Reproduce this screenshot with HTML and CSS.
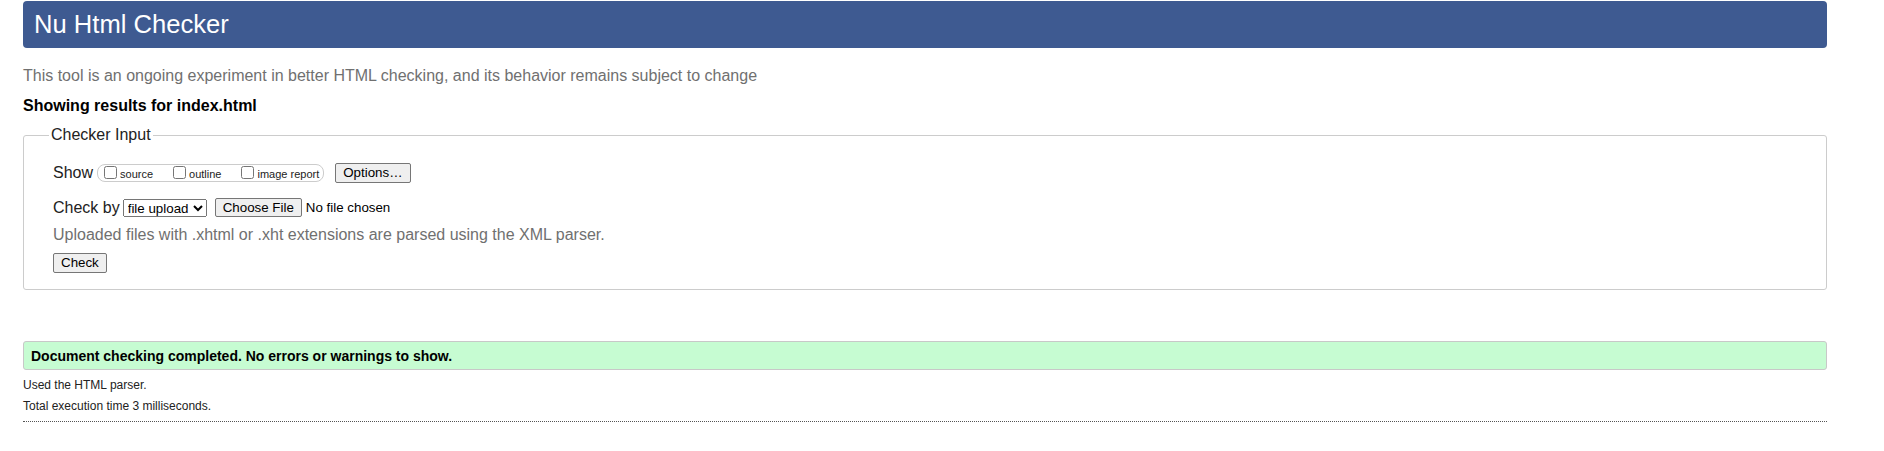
FILE: index.html
```html
<!DOCTYPE html>
<html lang="en">
<head>
<meta charset="utf-8">
<title>Nu Html Checker</title>
<link rel="stylesheet" href="styles.css">
</head>
<body>
<div class="page">
  <h1 class="title">Nu Html Checker</h1>
  <p class="tagline">This tool is an ongoing experiment in better HTML checking, and its behavior remains subject to change</p>
  <p class="showing">Showing results for index.html</p>
  <form class="checker">
    <fieldset class="input-set">
      <legend class="input-legend">Checker Input</legend>
      <div class="row row-show">
        <span class="row-label">Show</span>
        <span class="pill">
          <label class="opt"><input type="checkbox" class="cb"><span class="opt-text">source</span></label>
          <label class="opt"><input type="checkbox" class="cb"><span class="opt-text">outline</span></label>
          <label class="opt opt-last"><input type="checkbox" class="cb"><span class="opt-text">image report</span></label>
        </span>
        <button type="button" class="btn btn-options">Options…</button>
      </div>
      <div class="row row-by">
        <span class="row-label">Check by</span>
        <select class="sel"><option>file upload</option></select>
        <input type="file" class="file">
      </div>
      <p class="hint">Uploaded files with .xhtml or .xht extensions are parsed using the XML parser.</p>
      <div class="row row-submit"><button type="button" class="btn">Check</button></div>
    </fieldset>
  </form>
  <p class="success">Document checking completed. No errors or warnings to show.</p>
  <p class="meta meta-first">Used the HTML parser.</p>
  <p class="meta">Total execution time 3 milliseconds.</p>
  <hr class="rule">
</div>
</body>
</html>
```

FILE: styles.css
```css
html, body {
  margin: 0;
  padding: 0;
  background: #fff;
}

body {
  font-family: "Liberation Sans", Arial, sans-serif;
  font-size: 16px;
  color: #000;
}

.page {
  margin-left: 23px;
  width: 1804px;
  padding-top: 1px;
}

.title {
  margin: 0;
  height: 47px;
  line-height: 47px;
  padding: 0 11px;
  font-size: 25.6px;
  font-weight: normal;
  color: #fff;
  background: #3e5a91;
  border-radius: 4px;
}

.tagline {
  margin: 18.5px 0 0;
  color: #707070;
}

.showing {
  margin: 12px 0 0;
  font-weight: bold;
}

.checker {
  margin: 0;
}

.input-set {
  margin: 11.9px 0 0;
  padding: 0 29px 16px;
  border: 1px solid #cccccc;
  border-radius: 3px;
  min-width: 0;
}

.input-legend {
  padding: 0 2px;
  margin-left: -4px;
  color: #222;
}

.row {
  display: flex;
  align-items: center;
}

.row-show {
  margin-top: 18.9px;
  height: 20px;
}

.row-by {
  margin-top: 15px;
  height: 19px;
}

.row-submit {
  margin-top: 9.7px;
  height: 20px;
}

.row-label {
  color: #222;
}

.pill {
  display: flex;
  align-items: flex-start;
  box-sizing: border-box;
  height: 18px;
  margin-left: 4px;
  padding: 1px 4px 0 2px;
  border: 1px solid #cccccc;
  border-radius: 8px;
}

.opt {
  display: flex;
  align-items: flex-start;
  margin-right: 16px;
  font-size: 11px;
  color: #222;
}

.opt-last {
  margin-right: 0;
}

.cb {
  width: 13px;
  height: 13px;
  margin: 0 3px 0 4px;
}

.opt-text {
  line-height: 11px;
  margin-top: 3px;
}

.btn {
  box-sizing: border-box;
  height: 20px;
  padding: 0 7px;
  font-family: "Liberation Sans", Arial, sans-serif;
  font-size: 13.33px;
  line-height: 18px;
  color: #000;
  background: #efefef;
  border: 1px solid #767676;
  border-radius: 2px;
}

.btn-options {
  margin-left: 11px;
}

.sel {
  box-sizing: border-box;
  width: 84px;
  height: 18px;
  margin-left: 3px;
  font-family: "Liberation Sans", Arial, sans-serif;
  font-size: 13.33px;
  color: #000;
}

.file {
  margin-left: 8px;
  font-family: "Liberation Sans", Arial, sans-serif;
  font-size: 13.33px;
  color: #000;
}

.file::file-selector-button {
  box-sizing: border-box;
  height: 19px;
  padding: 0 7px;
  margin-right: 4px;
  font-family: "Liberation Sans", Arial, sans-serif;
  font-size: 13.33px;
  line-height: 17px;
  color: #000;
  background: #efefef;
  border: 1px solid #767676;
  border-radius: 2px;
}

.hint {
  margin: 8.5px 0 0;
  color: #707070;
}

.success {
  margin: 51px 0 0;
  padding: 6px 7px 5px;
  font-size: 14px;
  font-weight: bold;
  background: #c6fcd2;
  border: 1px solid #c8c8c8;
  border-radius: 3px;
}

.meta {
  margin: 7px 0 0;
  font-size: 12px;
  color: #222;
}

.meta-first {
  margin-top: 8px;
}

.rule {
  margin: 8px 0 0;
  height: 0;
  border: 0;
  border-top: 1px dotted #555;
}
```
